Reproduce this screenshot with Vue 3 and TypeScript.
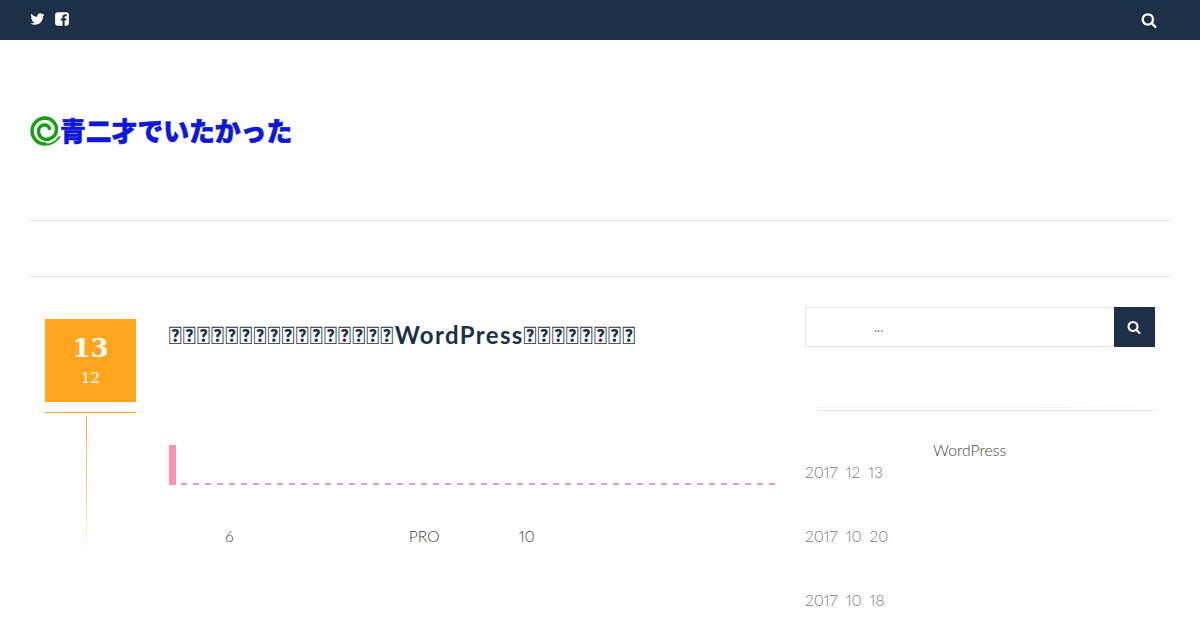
<script setup lang="ts">
const tofu = (n: number): string => '\uE000'.repeat(n)
const posts: { y: string; m: string; d: string }[] = [
  { y: '2017', m: '12', d: '13' },
  { y: '2017', m: '10', d: '20' },
  { y: '2017', m: '10', d: '18' },
]
</script>

<template>
  <div class="page">
    <header class="topbar">
      <div class="social">
        <svg class="ic" width="16" height="16" viewBox="0 0 1792 1792"><path fill="#fff" d="M1620 408q-67 98-162 167 1 14 1 42 0 130-38 259.5t-115.5 248.5-184.5 210.5-258 146-323 54.5q-271 0-496-145 35 4 78 4 225 0 401-138-105-2-188-64.5t-114-159.5q33 5 61 5 43 0 85-11-112-23-185.5-111.5t-73.5-205.5v-4q68 38 146 41-66-44-105-115t-39-154q0-88 44-163 121 149 294.5 238.5t371.5 99.5q-8-38-8-74 0-134 94.5-228.5t228.5-94.5q140 0 236 102 109-21 205-78-37 115-142 178 91-10 188-49z"/></svg>
        <svg class="ic" width="16" height="16" viewBox="0 0 1792 1792"><path fill="#fff" d="M1376 128q119 0 203.5 84.5t84.5 203.5v960q0 119-84.5 203.5t-203.5 84.5h-188v-595h199l30-232h-229v-148q0-56 23.5-84t91.5-28l122-1v-207q-63-9-178-9-136 0-217.5 80t-81.5 226v171h-200v232h200v595h-532q-119 0-203.5-84.5t-84.5-203.5v-960q0-119 84.5-203.5t203.5-84.5h960z"/></svg>
      </div>
      <svg class="topsearch" width="16" height="16" viewBox="0 0 1792 1792"><path fill="#fff" d="M1216 832q0-185-131.5-316.5t-316.5-131.5-316.5 131.5-131.5 316.5 131.5 316.5 316.5 131.5 316.5-131.5 131.5-316.5zm512 832q0 52-38 90t-90 38q-54 0-90-38l-343-342q-179 124-399 124-143 0-273.5-55.5t-225-150-150-225-55.5-273.5 55.5-273.5 150-225 225-150 273.5-55.5 273.5 55.5 225 150 150 225 55.5 273.5q0 220-124 399l343 343q37 37 37 90z"/></svg>
    </header>

    <div class="brand">
      <svg class="spiral" width="32" height="32" viewBox="0 0 32 32">
        <g fill="none" stroke="#12a012" stroke-linecap="round">
          <path stroke-width="3.4" d="M15 28A13 13 0 0 1 2 15A13.5 13 0 0 1 15 2A11.5 11.5 0 0 1 26.5 13.5A10.5 10 0 0 1 16 23.5A7.8 8 0 0 1 8.5 15A6 6 0 0 1 14 9A5 5 0 0 1 19.5 12.5"/>
          <path stroke-width="2" d="M29.5 21C26 26 20 28.8 15 28.6"/>
        </g>
      </svg>
      <span class="logotext">青二才でいたかった</span>
    </div>

    <nav class="navband"></nav>

    <div class="content">
      <main class="post">
        <aside class="datecol">
          <div class="datebox">
            <span class="day">13</span>
            <span class="month">12</span>
          </div>
          <div class="daterule"></div>
          <div class="datestem"></div>
        </aside>
        <div class="body">
          <h1 class="title"><span class="tf">{{ tofu(16) }}</span><span class="lat">WordPress</span><span class="tf">{{ tofu(8) }}</span></h1>
          <div class="heading"></div>
          <div class="para">
            <span class="w1">6</span>
            <span class="w2">PRO</span>
            <span class="w3">10</span>
          </div>
        </div>
      </main>

      <aside class="side">
        <form class="search" @submit.prevent>
          <div class="field"><span>...</span></div>
          <button class="go" type="button" aria-label="search">
            <svg width="14" height="14" viewBox="0 0 1792 1792"><path fill="#fff" d="M1216 832q0-185-131.5-316.5t-316.5-131.5-316.5 131.5-131.5 316.5 131.5 316.5 316.5 131.5 316.5-131.5 131.5-316.5zm512 832q0 52-38 90t-90 38q-54 0-90-38l-343-342q-179 124-399 124-143 0-273.5-55.5t-225-150-150-225-55.5-273.5 55.5-273.5 150-225 225-150 273.5-55.5 273.5 55.5 225 150 150 225 55.5 273.5q0 220-124 399l343 343q37 37 37 90z"/></svg>
          </button>
        </form>
        <div class="siderule"></div>
        <div class="wp">WordPress</div>
        <ul class="dates">
          <li v-for="p in posts" :key="p.y + p.m + p.d">
            <span>{{ p.y }}</span><span>{{ p.m }}</span><span>{{ p.d }}</span>
          </li>
        </ul>
      </aside>
    </div>
  </div>
</template>

<style>
html, body { margin: 0; background: #fff; overflow: hidden; }
</style>

<style scoped>
.page { width: 1200px; height: 630px; overflow: hidden; font-family: Lato, "Liberation Sans", sans-serif; color: #555; }
.topbar { height: 40px; background: #1e3048; display: flex; justify-content: space-between; padding: 0 30px; box-sizing: border-box; }
.social { display: flex; gap: 8px; padding-top: 11px; align-items: flex-start; }
.ic { display: block; }
.topsearch { margin: 12px 13px 0 0; }
.brand { height: 181px; box-sizing: border-box; margin: 0 30px; border-bottom: 1px solid #e2e2e2; padding-top: 76px; display: flex; align-items: flex-start; }
.spiral { display: block; flex: none; width: 32px; }
.logotext { font-family: "Noto Sans CJK JP", sans-serif; font-weight: 900; font-size: 25.8px; line-height: 32px; color: #1018d8; margin: -2px 0 0 -2px; -webkit-text-stroke: 0.6px #1018d8; white-space: nowrap; }
.navband { height: 56px; box-sizing: border-box; margin: 0 30px; border-bottom: 1px solid #e2e2e2; }
.content { display: flex; padding: 30px 45px 0; }
.post { width: 730px; display: flex; flex: none; }
.datecol { width: 91px; flex: none; padding-top: 12px; }
.datebox { height: 83px; background: #ffa61e; color: #fff; font-family: "DejaVu Serif", serif; display: flex; flex-direction: column; align-items: center; }
.day { font-size: 26px; font-weight: 700; line-height: 30px; margin-top: 14px; }
.month { font-size: 15px; line-height: 20px; margin-top: 5px; }
.daterule { height: 1px; background: #f0a830; margin-top: 10px; }
.datestem { width: 1px; height: 138px; margin: 3px 0 0 41px; background: linear-gradient(#eeb040, #f3d89c 60%, #fff); }
.body { margin-left: 33px; width: 606px; flex: none; }
.title { margin: 13px 0 0; font-size: 24px; font-weight: 700; line-height: 30px; color: #1e3048; white-space: nowrap; }
.tf { letter-spacing: 0.98px; }
.lat { letter-spacing: 1.35px; }
.heading { margin-top: 95px; height: 40px; box-sizing: border-box; border-left: 7px solid #ff8fae; position: relative; }
.heading::after { content: ""; position: absolute; left: 5px; right: 0; bottom: 0; height: 2px; background: repeating-linear-gradient(90deg, #eb9dba 0 6px, transparent 6px 12px); }
.para { display: flex; margin-top: 41px; font-size: 15.7px; font-weight: 300; line-height: 20px; color: #3f3f3f; font-variant-numeric: proportional-nums; }
.w1 { margin-left: 56px; }
.w2 { margin-left: 175px; }
.w3 { margin-left: 79px; }
.side { width: 350px; margin-left: 30px; flex: none; }
.search { display: flex; height: 40px; }
.field { flex: 1; box-sizing: border-box; border: 1px solid #e6e6e6; border-right: 0; font-size: 13px; color: #777; padding: 9px 0 0 68px; line-height: 20px; }
.go { width: 41px; border: 0; padding: 0 1px 0 0; background: #1e3048; display: flex; align-items: center; justify-content: center; }
.siderule { margin: 60px 0 0 12px; height: 3px; border-bottom: 1px solid #e6e6e6; background: linear-gradient(90deg, #f0f0f0, #f0f0f0 60%, #fff) top / 100% 1px no-repeat; }
.wp { margin: 28px 0 0 128px; font-size: 15.7px; font-weight: 300; line-height: 22px; color: #3f3f3f; }
.dates { list-style: none; margin: 0; padding: 0; font-size: 15.5px; font-weight: 300; color: #777; font-variant-numeric: proportional-nums; }
.dates li { height: 64px; line-height: 22px; display: flex; gap: 8px; }
</style>
